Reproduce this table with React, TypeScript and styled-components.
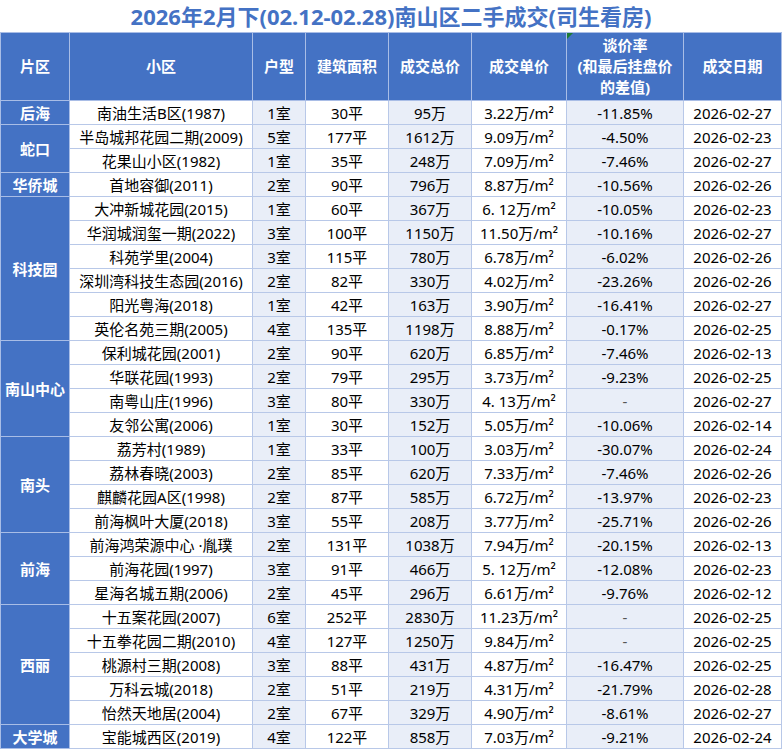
import React from "react";
import styled, { createGlobalStyle } from "styled-components";

const Global = createGlobalStyle`
  html, body { margin: 0; padding: 0; background: #ffffff; }
  body { font-family: "Noto Sans", "Noto Sans CJK SC", sans-serif; }
`;

type Row = [string, string, string, string, string, string, string];
type Group = { area: string; rows: Row[] };

const groups: Group[] = [
  { area: "后海", rows: [["南油生活B区(1987)", "1室", "30平", "95万", "3.22万/m²", "-11.85%", "2026-02-27"]] },
  {
    area: "蛇口",
    rows: [
      ["半岛城邦花园二期(2009)", "5室", "177平", "1612万", "9.09万/m²", "-4.50%", "2026-02-23"],
      ["花果山小区(1982)", "1室", "35平", "248万", "7.09万/m²", "-7.46%", "2026-02-27"],
    ],
  },
  { area: "华侨城", rows: [["首地容御(2011)", "2室", "90平", "796万", "8.87万/m²", "-10.56%", "2026-02-26"]] },
  {
    area: "科技园",
    rows: [
      ["大冲新城花园(2015)", "1室", "60平", "367万", "6. 12万/m²", "-10.05%", "2026-02-23"],
      ["华润城润玺一期(2022)", "3室", "100平", "1150万", "11.50万/m²", "-10.16%", "2026-02-27"],
      ["科苑学里(2004)", "3室", "115平", "780万", "6.78万/m²", "-6.02%", "2026-02-26"],
      ["深圳湾科技生态园(2016)", "2室", "82平", "330万", "4.02万/m²", "-23.26%", "2026-02-26"],
      ["阳光粤海(2018)", "1室", "42平", "163万", "3.90万/m²", "-16.41%", "2026-02-27"],
      ["英伦名苑三期(2005)", "4室", "135平", "1198万", "8.88万/m²", "-0.17%", "2026-02-25"],
    ],
  },
  {
    area: "南山中心",
    rows: [
      ["保利城花园(2001)", "2室", "90平", "620万", "6.85万/m²", "-7.46%", "2026-02-13"],
      ["华联花园(1993)", "2室", "79平", "295万", "3.73万/m²", "-9.23%", "2026-02-25"],
      ["南粤山庄(1996)", "3室", "80平", "330万", "4. 13万/m²", "-", "2026-02-27"],
      ["友邻公寓(2006)", "1室", "30平", "152万", "5.05万/m²", "-10.06%", "2026-02-14"],
    ],
  },
  {
    area: "南头",
    rows: [
      ["荔芳村(1989)", "1室", "33平", "100万", "3.03万/m²", "-30.07%", "2026-02-24"],
      ["荔林春晓(2003)", "2室", "85平", "620万", "7.33万/m²", "-7.46%", "2026-02-26"],
      ["麒麟花园A区(1998)", "2室", "87平", "585万", "6.72万/m²", "-13.97%", "2026-02-23"],
      ["前海枫叶大厦(2018)", "3室", "55平", "208万", "3.77万/m²", "-25.71%", "2026-02-26"],
    ],
  },
  {
    area: "前海",
    rows: [
      ["前海鸿荣源中心 ·胤璞", "2室", "131平", "1038万", "7.94万/m²", "-20.15%", "2026-02-13"],
      ["前海花园(1997)", "3室", "91平", "466万", "5. 12万/m²", "-12.08%", "2026-02-23"],
      ["星海名城五期(2006)", "2室", "45平", "296万", "6.61万/m²", "-9.76%", "2026-02-12"],
    ],
  },
  {
    area: "西丽",
    rows: [
      ["十五案花园(2007)", "6室", "252平", "2830万", "11.23万/m²", "-", "2026-02-25"],
      ["十五拳花园二期(2010)", "4室", "127平", "1250万", "9.84万/m²", "-", "2026-02-25"],
      ["桃源村三期(2008)", "3室", "88平", "431万", "4.87万/m²", "-16.47%", "2026-02-25"],
      ["万科云城(2018)", "2室", "51平", "219万", "4.31万/m²", "-21.79%", "2026-02-28"],
      ["怡然天地居(2004)", "2室", "67平", "329万", "4.90万/m²", "-8.61%", "2026-02-27"],
    ],
  },
  { area: "大学城", rows: [["宝能城西区(2019)", "4室", "122平", "858万", "7.03万/m²", "-9.21%", "2026-02-24"]] },
];

const widths = [69, 183, 53, 83, 83, 95, 117, 98];
const tinted = [false, true, false, true, false, true, false];

const Sheet = styled.div`
  width: 782px;
`;

const Title = styled.div`
  height: 32px;
  line-height: 32px;
  text-align: center;
  font-size: 22px;
  font-weight: 700;
  color: #4472c4;
  white-space: nowrap;
`;

const Table = styled.table`
  border-collapse: collapse;
  table-layout: fixed;
  width: 782px;
`;

const HeadRow = styled.tr`
  height: 68px;
`;

const HeadCell = styled.th<{ $flag?: boolean }>`
  position: relative;
  background: #4472c4;
  color: #ffffff;
  font-size: 15px;
  font-weight: 700;
  line-height: 21px;
  text-align: center;
  vertical-align: middle;
  border: 1px solid #a9bde6;
  padding: 0;
  &::before {
    content: "";
    display: ${(p) => (p.$flag ? "block" : "none")};
    position: absolute;
    left: 0;
    top: 0;
    width: 0;
    height: 0;
    border-top: 6px solid #1e7b34;
    border-right: 6px solid transparent;
  }
`;

const BodyRow = styled.tr`
  height: 24px;
`;

const AreaCell = styled.td`
  background: #4472c4;
  color: #ffffff;
  font-size: 15px;
  font-weight: 700;
  text-align: center;
  vertical-align: middle;
  border: 1px solid #a9bde6;
  padding: 0;
  white-space: nowrap;
`;

const Cell = styled.td<{ $tint?: boolean; $muted?: boolean }>`
  background: ${(p) => (p.$tint ? "#e9eef8" : "#ffffff")};
  color: ${(p) => (p.$muted ? "#555555" : "#000000")};
  font-size: 15px;
  line-height: 22px;
  text-align: center;
  vertical-align: middle;
  border: 1px solid #b8c8e8;
  padding: 0;
  white-space: nowrap;
  overflow: hidden;
`;

const headers = ["片区", "小区", "户型", "建筑面积", "成交总价", "成交单价"];

export default function App() {
  return (
    <>
      <Global />
      <Sheet>
        <Title>2026年2月下(02.12-02.28)南山区二手成交(司生看房)</Title>
        <Table>
          <colgroup>
            {widths.map((w, i) => (
              <col key={i} style={{ width: w }} />
            ))}
          </colgroup>
          <thead>
            <HeadRow>
              {headers.map((h) => (
                <HeadCell key={h}>{h}</HeadCell>
              ))}
              <HeadCell $flag>
                谈价率
                <br />
                (和最后挂盘价
                <br />
                的差值)
              </HeadCell>
              <HeadCell>成交日期</HeadCell>
            </HeadRow>
          </thead>
          <tbody>
            {groups.map((g) =>
              g.rows.map((r, ri) => (
                <BodyRow key={g.area + ri}>
                  {ri === 0 && <AreaCell rowSpan={g.rows.length}>{g.area}</AreaCell>}
                  {r.map((v, ci) => (
                    <Cell key={ci} $tint={tinted[ci]} $muted={v === "-"}>
                      {v}
                    </Cell>
                  ))}
                </BodyRow>
              ))
            )}
          </tbody>
        </Table>
      </Sheet>
    </>
  );
}
